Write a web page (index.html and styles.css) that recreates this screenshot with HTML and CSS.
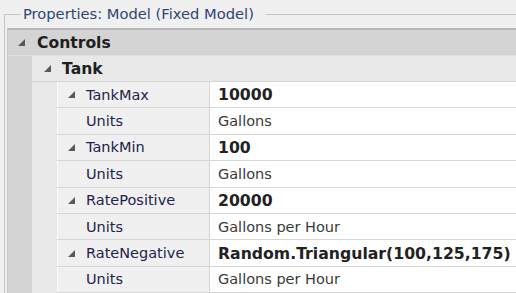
FILE: index.html
```html
<!DOCTYPE html>
<html lang="en">
<head>
    <meta charset="UTF-8">
    <title>Properties</title>
    <link rel="stylesheet" href="styles.css">
</head>
<body>
    <fieldset class="group">
        <legend>Properties: Model (Fixed Model)</legend>
        <div class="grid">
            <div class="cat">
                <div class="cat-title">
                    <svg class="tri" width="7" height="7" viewBox="0 0 7 7"><polygon points="7,0 7,7 0,7"/></svg>
                    <span>Controls</span>
                </div>
                <div class="cat-items">
                    <div class="sub">
                        <div class="sub-title">
                            <svg class="tri" width="7" height="7" viewBox="0 0 7 7"><polygon points="7,0 7,7 0,7"/></svg>
                            <span>Tank</span>
                        </div>
                        <div class="sub-items">
                            <div class="row">
                                <div class="name"><svg class="tri" width="7" height="7" viewBox="0 0 7 7"><polygon points="7,0 7,7 0,7"/></svg>TankMax</div>
                                <div class="value bold">10000</div>
                            </div>
                            <div class="row">
                                <div class="name child">Units</div>
                                <div class="value">Gallons</div>
                            </div>
                            <div class="row">
                                <div class="name"><svg class="tri" width="7" height="7" viewBox="0 0 7 7"><polygon points="7,0 7,7 0,7"/></svg>TankMin</div>
                                <div class="value bold">100</div>
                            </div>
                            <div class="row">
                                <div class="name child">Units</div>
                                <div class="value">Gallons</div>
                            </div>
                            <div class="row">
                                <div class="name"><svg class="tri" width="7" height="7" viewBox="0 0 7 7"><polygon points="7,0 7,7 0,7"/></svg>RatePositive</div>
                                <div class="value bold">20000</div>
                            </div>
                            <div class="row">
                                <div class="name child">Units</div>
                                <div class="value">Gallons per Hour</div>
                            </div>
                            <div class="row">
                                <div class="name"><svg class="tri" width="7" height="7" viewBox="0 0 7 7"><polygon points="7,0 7,7 0,7"/></svg>RateNegative</div>
                                <div class="value bold">Random.Triangular(100,125,175)</div>
                            </div>
                            <div class="row">
                                <div class="name child">Units</div>
                                <div class="value">Gallons per Hour</div>
                            </div>
                            <div class="row">
                                <div class="name"></div>
                                <div class="value"></div>
                            </div>
                        </div>
                    </div>
                </div>
            </div>
        </div>
    </fieldset>
</body>
</html>
```

FILE: styles.css
```css
body {
    margin: 0;
    background-color: #f0f0f0;
    font-family: "DejaVu Sans", Tahoma, sans-serif;
    font-size: 14.5px;
    overflow: hidden;
    height: 293px;
}

.group {
    margin: 0 -20px 0 4px;
    padding: 0 0 0 2px;
    border: 1px solid #c4c4c4;
    min-width: 0;
}

.group legend {
    margin-left: 14px;
    padding: 0 12px 0 2px;
    font-size: 14.7px;
    line-height: 28px;
    color: #2f4572;
}

.grid {
    border-top: 2px solid #b8b8b8;
    border-left: 1px solid #c8c8c8;
}

.tri {
    fill: #595959;
    flex: none;
}

.cat {
    background-color: #d4d4d4;
}

.cat-title {
    display: flex;
    align-items: center;
    height: 25px;
    padding-left: 10px;
    font-weight: bold;
    font-size: 15.6px;
    color: #1e1e1e;
    border-bottom: 1px solid #e2e2e2;
}

.cat-title .tri {
    margin-right: 12px;
}

.cat-items {
    padding-left: 24px;
}

.sub {
    background-color: #e8e8e8;
}

.sub-title {
    display: flex;
    align-items: center;
    height: 25px;
    padding-left: 12px;
    font-weight: bold;
    font-size: 15.6px;
    color: #1e1e1e;
    border-bottom: 1px solid #d6d6d6;
}

.sub-title .tri {
    margin-right: 11px;
}

.sub-items {
    padding-left: 25px;
}

.row {
    display: flex;
    height: 26.4px;
    border-bottom: 1px solid #d6d6d6;
    box-sizing: border-box;
}

.name {
    display: flex;
    align-items: center;
    width: 153px;
    padding-left: 10px;
    background-color: #f0f0f0;
    border-left: 1px solid #fafafa;
    border-right: 1px solid #d6d6d6;
    color: #23234a;
    box-sizing: border-box;
}

.name .tri {
    margin-right: 11px;
}

.name.child {
    padding-left: 28px;
}

.value {
    display: flex;
    align-items: center;
    flex: 1;
    padding-left: 8px;
    background-color: #fff;
    color: #3a3a3a;
}

.value.bold {
    font-weight: bold;
    font-size: 15.7px;
    color: #222;
}
```
